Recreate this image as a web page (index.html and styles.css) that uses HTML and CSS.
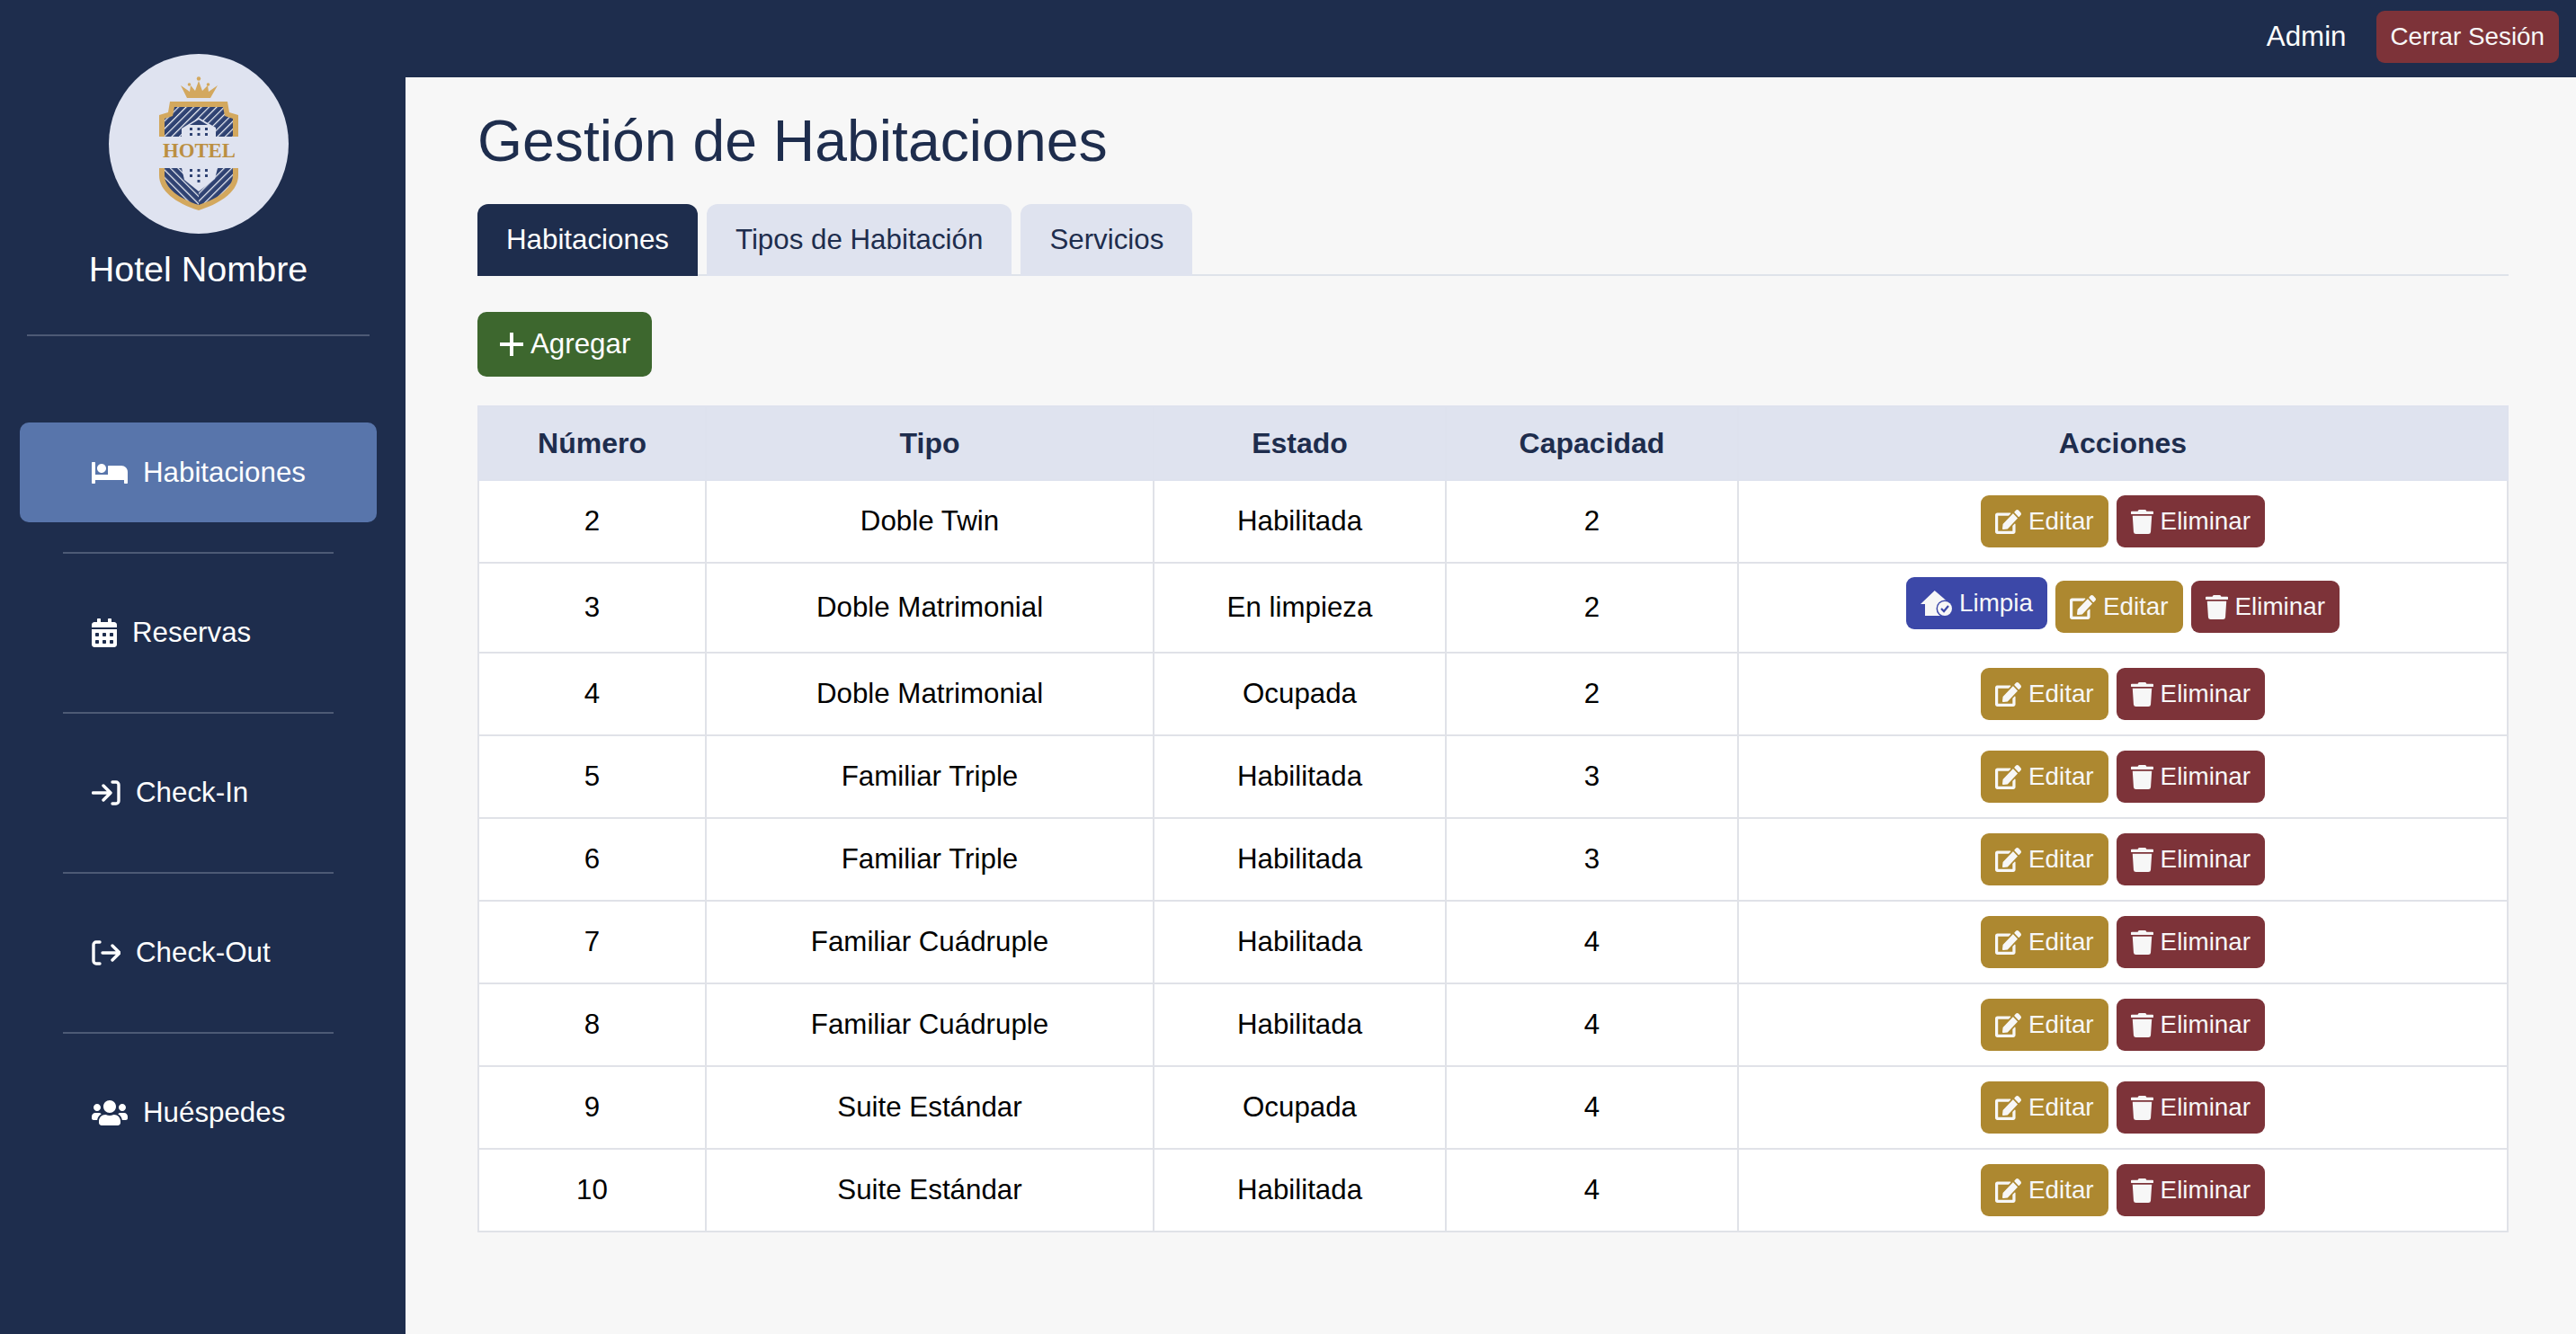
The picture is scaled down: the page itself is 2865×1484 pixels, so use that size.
FILE: index.html
```html
<!DOCTYPE html>
<html lang="es">
<head>
    <meta charset="UTF-8">
    <meta name="viewport" content="width=device-width, initial-scale=1.0">
    <title>Gestión de Habitaciones</title>
    <link rel="stylesheet" href="styles.css">
</head>
<body>
    <svg class="sprite" xmlns="http://www.w3.org/2000/svg">
        <symbol id="i-bed" viewBox="0 0 640 512"><path d="M176 256c44.11 0 80-35.89 80-80s-35.89-80-80-80-80 35.89-80 80 35.89 80 80 80zm352-128H304c-8.84 0-16 7.16-16 16v144H64V80c0-8.84-7.16-16-16-16H16C7.16 64 0 71.16 0 80v352c0 8.84 7.16 16 16 16h32c8.84 0 16-7.16 16-16v-48h512v48c0 8.84 7.16 16 16 16h32c8.84 0 16-7.16 16-16V240c0-61.86-50.14-112-112-112z"/></symbol>
        <symbol id="i-cal" viewBox="0 0 448 512"><path d="M0 464c0 26.5 21.5 48 48 48h352c26.5 0 48-21.5 48-48V192H0v272zm320-196c0-6.6 5.4-12 12-12h40c6.6 0 12 5.4 12 12v40c0 6.6-5.4 12-12 12h-40c-6.6 0-12-5.4-12-12v-40zm0 128c0-6.6 5.4-12 12-12h40c6.6 0 12 5.4 12 12v40c0 6.6-5.4 12-12 12h-40c-6.6 0-12-5.4-12-12v-40zM192 268c0-6.6 5.4-12 12-12h40c6.6 0 12 5.4 12 12v40c0 6.6-5.4 12-12 12h-40c-6.6 0-12-5.4-12-12v-40zm0 128c0-6.6 5.4-12 12-12h40c6.6 0 12 5.4 12 12v40c0 6.6-5.4 12-12 12h-40c-6.6 0-12-5.4-12-12v-40zM64 268c0-6.6 5.4-12 12-12h40c6.6 0 12 5.4 12 12v40c0 6.6-5.4 12-12 12H76c-6.6 0-12-5.4-12-12v-40zm0 128c0-6.6 5.4-12 12-12h40c6.6 0 12 5.4 12 12v40c0 6.6-5.4 12-12 12H76c-6.6 0-12-5.4-12-12v-40zM400 64h-48V16c0-8.8-7.2-16-16-16h-32c-8.8 0-16 7.2-16 16v48H160V16c0-8.8-7.2-16-16-16h-32c-8.8 0-16 7.2-16 16v48H48C21.5 64 0 85.5 0 112v48h448v-48c0-26.5-21.5-48-48-48z"/></symbol>
        <symbol id="i-in" viewBox="0 0 32 28"><path d="M1.5 14H20M13 6l8 8-8 8M23 2h4a3 3 0 0 1 3 3v18a3 3 0 0 1-3 3h-4" fill="none" stroke="currentColor" stroke-width="3.4" stroke-linecap="round" stroke-linejoin="round"/></symbol>
        <symbol id="i-out" viewBox="0 0 32 28"><path d="M12 14h18.5M23 6l8 8-8 8M9 2H5a3 3 0 0 0-3 3v18a3 3 0 0 0 3 3h4" fill="none" stroke="currentColor" stroke-width="3.4" stroke-linecap="round" stroke-linejoin="round"/></symbol>
        <symbol id="i-users" viewBox="0 0 640 512"><path d="M96 224c35.3 0 64-28.7 64-64s-28.7-64-64-64-64 28.7-64 64 28.7 64 64 64zm448 0c35.3 0 64-28.7 64-64s-28.7-64-64-64-64 28.7-64 64 28.7 64 64 64zm32 32h-64c-17.6 0-33.5 7.1-45.1 18.6 40.3 22.1 68.9 62 75.1 109.4h66c17.7 0 32-14.3 32-32v-32c0-35.3-28.7-64-64-64zm-256 0c61.9 0 112-50.1 112-112S381.9 32 320 32 208 82.1 208 144s50.1 112 112 112zm76.8 32h-8.3c-20.8 10-43.9 16-68.5 16s-47.6-6-68.5-16h-8.3C179.6 288 128 339.6 128 403.2V432c0 26.5 21.5 48 48 48h288c26.5 0 48-21.5 48-48v-28.8c0-63.6-51.6-115.2-115.2-115.2zm-223.7-13.4C161.5 263.1 145.6 256 128 256H64c-35.3 0-64 28.7-64 64v32c0 17.7 14.3 32 32 32h65.9c6.3-47.4 34.9-87.3 75.2-109.4z"/></symbol>
        <symbol id="i-edit" viewBox="0 0 576 512" preserveAspectRatio="none"><path d="M402.6 83.2l90.2 90.2c3.8 3.8 3.8 10 0 13.8L274.4 405.6l-92.8 10.3c-12.4 1.4-22.9-9.1-21.5-21.5l10.3-92.8L388.8 83.2c3.8-3.8 10-3.8 13.8 0zm162-22.9l-48.8-48.8c-15.2-15.2-39.9-15.2-55.2 0l-35.4 35.4c-3.8 3.8-3.8 10 0 13.8l90.2 90.2c3.8 3.8 10 3.8 13.8 0l35.4-35.4c15.2-15.3 15.2-40 0-55.2zM384 346.2V448H64V128h229.8c3.2 0 6.2-1.3 8.5-3.5l40-40c7.6-7.6 2.2-20.5-8.5-20.5H48C21.5 64 0 85.5 0 112v352c0 26.5 21.5 48 48 48h352c26.5 0 48-21.5 48-48V306.2c0-10.7-12.9-16-20.5-8.5l-40 40c-2.2 2.3-3.5 5.3-3.5 8.5z"/></symbol>
        <symbol id="i-trash" viewBox="0 0 448 512" preserveAspectRatio="none"><path d="M432 32H312l-9.4-18.7A24 24 0 0 0 281.1 0H166.8a23.72 23.72 0 0 0-21.4 13.3L136 32H16A16 16 0 0 0 0 48v32a16 16 0 0 0 16 16h416a16 16 0 0 0 16-16V48a16 16 0 0 0-16-16zM53.2 467a48 48 0 0 0 47.9 45h245.8a48 48 0 0 0 47.9-45L416 128H32z"/></symbol>
    </svg>

    <aside class="sidebar">
        <div class="logo">
            <svg viewBox="0 0 200 200" width="200" height="200" xmlns="http://www.w3.org/2000/svg">
                <defs>
                    <pattern id="rayasA" width="6" height="6" patternUnits="userSpaceOnUse" patternTransform="rotate(45)">
                        <rect width="6" height="6" fill="#2f4272"/>
                        <rect width="1.2" height="6" fill="#f2f4f9"/>
                    </pattern>
                    <pattern id="rayasB" width="6" height="6" patternUnits="userSpaceOnUse" patternTransform="rotate(-45)">
                        <rect width="6" height="6" fill="#2f4272"/>
                        <rect width="1.2" height="6" fill="#f2f4f9"/>
                    </pattern>
                </defs>
                <circle cx="100" cy="100" r="100" fill="#dfe3f0"/>
                <path d="M80 35l10 7 1-7 5 6 4-11 4 11 6-6 1 7 10-7-8 14H87z" fill="#d3a85e"/>
                <circle cx="100" cy="27.5" r="2.2" fill="#d3a85e"/>
                <circle cx="89.5" cy="34" r="1.8" fill="#d3a85e"/>
                <circle cx="110.5" cy="34" r="1.8" fill="#d3a85e"/>
                <path d="M68 53h64l2 12 10 3v24H56V68l10-3z" fill="#d3a85e"/>
                <path d="M73 59h54l2 10 9 3v20H62V72l9-3z" fill="url(#rayasA)"/>
                <path d="M81 83l19-12 19 11v10H81z" fill="#dfe3f0"/>
                <path d="M100 73l10 6H90z" fill="#2f4272"/>
                <g fill="#2f4272">
                    <rect x="90" y="82" width="3" height="3"/><rect x="98.5" y="82" width="3" height="3"/><rect x="107" y="82" width="3" height="3"/>
                    <rect x="90" y="88" width="3" height="3"/><rect x="98.5" y="88" width="3" height="3"/><rect x="107" y="88" width="3" height="3"/>
                </g>
                <path d="M56 127h88v8c0 17-18 31-44 39-26-8-44-22-44-39z" fill="#d3a85e"/>
                <path d="M62 127h38v41c-22-7-38-19-38-33z" fill="url(#rayasB)"/>
                <path d="M138 127h-38v41c22-7 38-19 38-33z" fill="url(#rayasA)"/>
                <path d="M81 127h40l-3 12-18 14-16-13z" fill="#dfe3f0"/>
                <g fill="#2f4272">
                    <rect x="90" y="128" width="3" height="3"/><rect x="98.5" y="128" width="3" height="3"/><rect x="107" y="128" width="3" height="3"/>
                    <rect x="90" y="134" width="3" height="3"/><rect x="98.5" y="134" width="3" height="3"/><rect x="107" y="134" width="3" height="3"/>
                    <rect x="98.5" y="140" width="3" height="3"/>
                </g>
                <text x="60" y="115" textLength="81" lengthAdjust="spacingAndGlyphs" class="logo-text">HOTEL</text>
            </svg>
        </div>
        <h2 class="hotel-nombre">Hotel Nombre</h2>
        <hr class="sidebar-linea">
        <nav class="menu">
            <a class="menu-item activo" href="#"><svg class="ico-menu ico-ancho"><use href="#i-bed"/></svg>Habitaciones</a>
            <a class="menu-item" href="#"><svg class="ico-menu ico-cal"><use href="#i-cal"/></svg>Reservas</a>
            <a class="menu-item" href="#"><svg class="ico-menu ico-check"><use href="#i-in"/></svg>Check-In</a>
            <a class="menu-item" href="#"><svg class="ico-menu ico-check"><use href="#i-out"/></svg>Check-Out</a>
            <a class="menu-item" href="#"><svg class="ico-menu ico-ancho"><use href="#i-users"/></svg>Huéspedes</a>
        </nav>
    </aside>

    <header class="topbar">
        <span class="usuario">Admin</span>
        <button class="btn btn-rojo btn-sesion">Cerrar Sesión</button>
    </header>

    <main class="contenido">
        <h1>Gestión de Habitaciones</h1>

        <div class="tabs">
            <a class="tab activo" href="#">Habitaciones</a>
            <a class="tab" href="#">Tipos de Habitación</a>
            <a class="tab" href="#">Servicios</a>
        </div>

        <button class="btn-agregar"><span class="mas"></span>Agregar</button>

        <table>
            <colgroup>
                <col class="col-numero"><col class="col-tipo"><col class="col-estado"><col class="col-capacidad"><col>
            </colgroup>
            <thead>
                <tr><th>Número</th><th>Tipo</th><th>Estado</th><th>Capacidad</th><th>Acciones</th></tr>
            </thead>
            <tbody>
                <tr><td>2</td><td>Doble Twin</td><td>Habilitada</td><td>2</td><td><div class="acciones"><button class="btn btn-oro"><svg class="ico-editar"><use href="#i-edit"/></svg>Editar</button><button class="btn btn-rojo"><svg class="ico-borrar"><use href="#i-trash"/></svg>Eliminar</button></div></td></tr>
                <tr class="fila-limpieza"><td>3</td><td>Doble Matrimonial</td><td>En limpieza</td><td>2</td><td><div class="acciones">
                    <button class="btn btn-azul">
                        <svg class="ico-limpia" viewBox="0 0 35 29"><path d="M15.7 0L32 14v14H5V15H0z" fill="currentColor"/><circle cx="27" cy="20" r="9.5" fill="#3c48a8"/><circle cx="27" cy="20" r="8" fill="currentColor"/><path d="M23 20l3 3 5-6" fill="none" stroke="#3c48a8" stroke-width="2.2"/></svg>Limpia
                    </button><button class="btn btn-oro"><svg class="ico-editar"><use href="#i-edit"/></svg>Editar</button><button class="btn btn-rojo"><svg class="ico-borrar"><use href="#i-trash"/></svg>Eliminar</button></div></td></tr>
                <tr><td>4</td><td>Doble Matrimonial</td><td>Ocupada</td><td>2</td><td><div class="acciones"><button class="btn btn-oro"><svg class="ico-editar"><use href="#i-edit"/></svg>Editar</button><button class="btn btn-rojo"><svg class="ico-borrar"><use href="#i-trash"/></svg>Eliminar</button></div></td></tr>
                <tr><td>5</td><td>Familiar Triple</td><td>Habilitada</td><td>3</td><td><div class="acciones"><button class="btn btn-oro"><svg class="ico-editar"><use href="#i-edit"/></svg>Editar</button><button class="btn btn-rojo"><svg class="ico-borrar"><use href="#i-trash"/></svg>Eliminar</button></div></td></tr>
                <tr><td>6</td><td>Familiar Triple</td><td>Habilitada</td><td>3</td><td><div class="acciones"><button class="btn btn-oro"><svg class="ico-editar"><use href="#i-edit"/></svg>Editar</button><button class="btn btn-rojo"><svg class="ico-borrar"><use href="#i-trash"/></svg>Eliminar</button></div></td></tr>
                <tr><td>7</td><td>Familiar Cuádruple</td><td>Habilitada</td><td>4</td><td><div class="acciones"><button class="btn btn-oro"><svg class="ico-editar"><use href="#i-edit"/></svg>Editar</button><button class="btn btn-rojo"><svg class="ico-borrar"><use href="#i-trash"/></svg>Eliminar</button></div></td></tr>
                <tr><td>8</td><td>Familiar Cuádruple</td><td>Habilitada</td><td>4</td><td><div class="acciones"><button class="btn btn-oro"><svg class="ico-editar"><use href="#i-edit"/></svg>Editar</button><button class="btn btn-rojo"><svg class="ico-borrar"><use href="#i-trash"/></svg>Eliminar</button></div></td></tr>
                <tr><td>9</td><td>Suite Estándar</td><td>Ocupada</td><td>4</td><td><div class="acciones"><button class="btn btn-oro"><svg class="ico-editar"><use href="#i-edit"/></svg>Editar</button><button class="btn btn-rojo"><svg class="ico-borrar"><use href="#i-trash"/></svg>Eliminar</button></div></td></tr>
                <tr><td>10</td><td>Suite Estándar</td><td>Habilitada</td><td>4</td><td><div class="acciones"><button class="btn btn-oro"><svg class="ico-editar"><use href="#i-edit"/></svg>Editar</button><button class="btn btn-rojo"><svg class="ico-borrar"><use href="#i-trash"/></svg>Eliminar</button></div></td></tr>
            </tbody>
        </table>
    </main>
</body>
</html>
```

FILE: styles.css
```css
* {
    box-sizing: border-box;
}
body {
    margin: 0;
    height: 100vh;
    overflow: hidden;
    display: grid;
    grid-template-columns: 451px 1fr;
    grid-template-rows: 86px 1fr;
    font-family: "Liberation Sans", Arial, sans-serif;
    font-size: 31.3px;
    color: #000;
    background-color: #f7f7f7;
}
.sprite {
    display: none;
}

/* barra lateral */
.sidebar {
    grid-row: 1 / 3;
    background-color: #1e2d4d;
    color: white;
    padding: 60px 32px 0 22px;
}
.logo {
    display: flex;
    justify-content: center;
}
.logo svg {
    display: block;
}
.logo-text {
    font-family: "Liberation Serif", serif;
    font-weight: bold;
    font-size: 23px;
    fill: #bb8f42;
}
.hotel-nombre {
    margin: 17px 0 0;
    font-size: 39.5px;
    font-weight: normal;
    line-height: 45px;
    text-align: center;
}
.sidebar-linea {
    margin: 50px 8px 0 8px;
    border: none;
    height: 2px;
    background-color: #4d5a75;
}
.menu {
    margin-top: 96px;
    display: flex;
    flex-direction: column;
}
.menu-item {
    display: flex;
    align-items: center;
    gap: 17px;
    height: 111px;
    padding-left: 80px;
    color: white;
    text-decoration: none;
    border-radius: 10px;
    position: relative;
    margin-bottom: 67px;
    fill: white;
}
.menu-item.activo {
    background-color: #5875ab;
}
.menu-item::after {
    content: "";
    position: absolute;
    left: 48px;
    right: 48px;
    bottom: -35px;
    height: 2px;
    background-color: #4d5a75;
}
.menu-item:last-child::after {
    display: none;
}
.ico-menu {
    flex: none;
    height: 32px;
}
.ico-ancho {
    width: 40px;
}
.ico-cal {
    width: 28px;
}
.ico-check {
    width: 32px;
    height: 28px;
}

/* barra superior */
.topbar {
    grid-column: 2;
    background-color: #1e2d4d;
    display: flex;
    justify-content: flex-end;
    align-items: center;
    gap: 33px;
    padding: 0 19px 4px 0;
}
.usuario {
    color: white;
}
.btn {
    display: inline-flex;
    align-items: center;
    height: 58px;
    padding: 0 16px;
    border: none;
    border-radius: 9px;
    color: #f7f7f7;
    font-family: inherit;
    font-size: 27.8px;
    cursor: pointer;
}
.btn-rojo {
    background-color: #7d3339;
    fill: #f7f7f7;
}
.btn-oro {
    background-color: #ad8830;
    fill: #f7f7f7;
}
.btn-azul {
    background-color: #3c48a8;
    color: #f7f7f7;
    margin-bottom: 4px;
}
.ico-editar {
    width: 29px;
    height: 27px;
    margin-right: 8px;
}
.ico-borrar {
    width: 25px;
    height: 27px;
    margin-right: 8px;
}
.ico-limpia {
    width: 35px;
    height: 29px;
    margin-right: 8px;
}

/* contenido */
.contenido {
    padding: 0 75px 0 80px;
    min-width: 0;
}
h1 {
    margin: 34px 0 0;
    font-size: 64.3px;
    font-weight: normal;
    line-height: 74px;
    color: #1e2d4d;
}
.tabs {
    display: flex;
    gap: 10px;
    margin-top: 33px;
    border-bottom: 2px solid #dfe3ea;
    height: 80px;
}
.tab {
    display: flex;
    align-items: center;
    height: 80px;
    padding: 0 32px;
    background-color: #dfe3ef;
    color: #1e2d4d;
    text-decoration: none;
    border-radius: 12px 12px 0 0;
}
.tab.activo {
    background-color: #1e2d4d;
    color: white;
}
.btn-agregar {
    display: flex;
    align-items: center;
    gap: 8px;
    height: 72px;
    margin-top: 40px;
    padding: 0 24px 0 25px;
    border: none;
    border-radius: 10px;
    background-color: #3d672e;
    color: white;
    font-family: inherit;
    font-size: 31.3px;
    cursor: pointer;
}
.mas {
    position: relative;
    width: 26px;
    height: 26px;
}
.mas::before,
.mas::after {
    content: "";
    position: absolute;
    background-color: white;
}
.mas::before {
    left: 0;
    right: 0;
    top: 11px;
    height: 4px;
}
.mas::after {
    top: 0;
    bottom: 0;
    left: 11px;
    width: 4px;
}
table {
    width: 100%;
    margin-top: 32px;
    table-layout: fixed;
    border-collapse: collapse;
    background-color: white;
}
.col-numero {
    width: 253px;
}
.col-tipo {
    width: 498px;
}
.col-estado,
.col-capacidad {
    width: 325px;
}
th {
    height: 82px;
    padding: 0;
    background-color: #dfe3ef;
    border: 2px solid #dee2ee;
    color: #1e2d4d;
    font-size: 32px;
}
td {
    height: 92px;
    padding: 0;
    border: 2px solid #e0e2e8;
    text-align: center;
}
.fila-limpieza td {
    height: 100px;
}
.acciones {
    display: flex;
    justify-content: center;
    align-items: flex-end;
    gap: 9px;
}
.fila-limpieza .acciones {
    padding-bottom: 6px;
}
```
